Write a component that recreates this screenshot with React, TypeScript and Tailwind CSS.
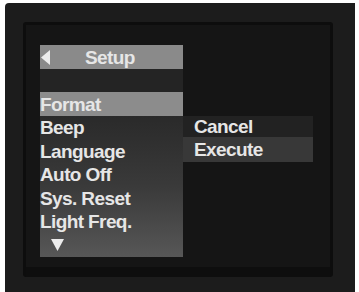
import React from "react";

const font = { fontFamily: '"Liberation Sans", Arial, sans-serif' };

export default function App() {
  const items = ["Beep", "Language", "Auto Off", "Sys. Reset", "Light Freq."];
  return (
    <div className="w-[359px] h-[292px] bg-white flex pt-[3px] pl-[5px] pr-[4px] overflow-hidden" style={font}>
      <div className="flex-1 bg-[#1c1c1c] rounded-tl-[4px] pt-[19px] pl-[18px] pr-[22px] flex flex-col">
        <div className="h-[255px] bg-[#0d0d0d] rounded-[3px] pl-[3px] pt-[3px] pr-[3px] flex flex-col">
          <div className="h-[242px] bg-[#151515] flex pl-[14px] pt-[20px] font-bold text-[19px] text-[#e6e6e6] tracking-[-0.6px]">
            {/* left panel */}
            <div className="w-[143px] h-[212px] flex flex-col">
              <div className="h-[24px] bg-[#8a8a8a] flex items-center relative">
                <svg width="10" height="15" viewBox="0 0 10 15" className="ml-[1px]">
                  <polygon points="9,0 9,15 0,7.5" fill="#ececec" />
                </svg>
                <span className="ml-[34px] leading-none">Setup</span>
              </div>
              <div className="h-[23px] bg-[#242424]" />
              <div className="h-[24px] bg-[#8c8c8c] flex items-center leading-none">Format</div>
              <div className="flex-1 bg-gradient-to-b from-[#2a2a2a] via-[#3a3a3a] to-[#575757] flex flex-col">
                {items.map((t) => (
                  <div key={t} className="h-[23.5px] flex items-center leading-none">{t}</div>
                ))}
                <div className="h-[23px] flex items-center pl-[11px]">
                  <svg width="13" height="12" viewBox="0 0 13 12">
                    <polygon points="0,0 13,0 6.5,12" fill="#ececec" />
                  </svg>
                </div>
              </div>
            </div>
            {/* right panel */}
            <div className="w-[130px] flex flex-col pt-[71px]">
              <div className="h-[21px] bg-[#222222] flex items-center pl-[11px] leading-none">Cancel</div>
              <div className="h-[25px] bg-[#383838] flex items-center pl-[11px] leading-none">Execute</div>
            </div>
          </div>
          <div className="flex-1 bg-[#0e0e0e]" />
        </div>
      </div>
    </div>
  );
}
